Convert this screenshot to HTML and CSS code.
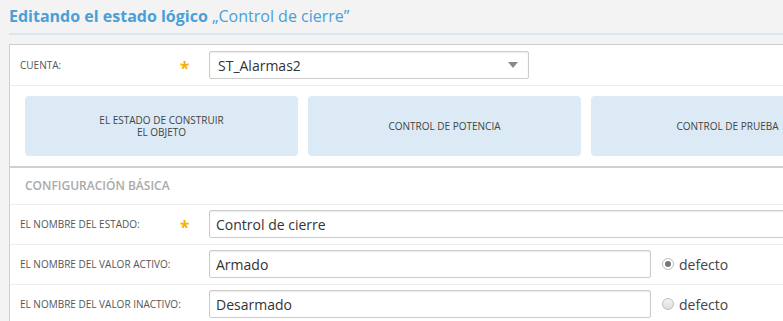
FILE: index.html
```html
<!DOCTYPE html>
<html lang="es">
<head>
<meta charset="utf-8">
<title>Editando el estado lógico</title>
<link rel="stylesheet" href="styles.css">
</head>
<body>
<div class="page">
  <header class="header">
    <h1 class="title"><span class="title-strong">Editando el estado lógico</span> <span class="title-name">„Control de cierre”</span></h1>
  </header>
  <div class="panel">
    <div class="row">
      <label class="label">CUENTA:</label>
      <span class="req">*</span>
      <div class="select">
        <span class="select-value">ST_Alarmas2</span>
        <span class="select-arrow"></span>
      </div>
    </div>
    <div class="cards">
      <div class="card"><span class="card-text">EL ESTADO DE CONSTRUIR<br>EL OBJETO</span></div>
      <div class="card"><span class="card-text">CONTROL DE POTENCIA</span></div>
      <div class="card"><span class="card-text">CONTROL DE PRUEBA</span></div>
    </div>
    <div class="section-title">CONFIGURACIÓN BÁSICA</div>
    <div class="row row-tight">
      <label class="label">EL NOMBRE DEL ESTADO:</label>
      <span class="req">*</span>
      <div class="input input-wide">Control de cierre</div>
    </div>
    <div class="row row-tight">
      <label class="label">EL NOMBRE DEL VALOR ACTIVO:</label>
      <span class="req"></span>
      <div class="input input-mid">Armado</div>
      <span class="radio radio-on"></span>
      <span class="radio-label">defecto</span>
    </div>
    <div class="row row-tight">
      <label class="label">EL NOMBRE DEL VALOR INACTIVO:</label>
      <span class="req"></span>
      <div class="input input-mid">Desarmado</div>
      <span class="radio"></span>
      <span class="radio-label">defecto</span>
    </div>
  </div>
</div>
</body>
</html>
```
FILE: styles.css
```css
html, body {
  margin: 0;
  padding: 0;
  background: #f3f3f3;
  overflow: hidden;
}
body {
  font-family: "Open Sans", "Noto Sans", sans-serif;
  color: #444;
}
.page {
  width: 920px;
}
.header {
  margin-left: 9px;
  padding-top: 4px;
  padding-bottom: 5px;
  border-bottom: 2px solid #d6e6f2;
}
.title {
  margin: 0;
  font-size: 16px;
  line-height: 24px;
  color: #4a9fd6;
  font-weight: 400;
  white-space: nowrap;
}
.title-strong {
  font-weight: 700;
}
.panel {
  margin: 9px 0 0 9px;
  background: #fff;
  border: 1px solid #cfcfcf;
  border-right: none;
}
.row {
  display: flex;
  align-items: center;
  padding: 6px 0 6px 10px;
  border-bottom: 1px solid #ececec;
}
.row-tight {
  padding-top: 5px;
}
.label {
  flex: none;
  width: 160px;
  font-size: 10px;
  color: #555;
  white-space: nowrap;
}
.req {
  flex: none;
  width: 29px;
  color: #f5b000;
  font-weight: 700;
  font-size: 17px;
  line-height: 17px;
  padding-top: 5px;
  box-sizing: border-box;
  height: 20px;
}
.select, .input {
  box-sizing: border-box;
  height: 28px;
  border: 1px solid #cccccc;
  border-radius: 2px;
  box-shadow: inset 0 1px 2px rgba(0,0,0,0.08);
  background: #fff;
  font-size: 14px;
  color: #333;
  display: flex;
  align-items: center;
}
.select {
  flex: none;
  width: 320px;
  padding: 0 8px;
  justify-content: space-between;
}
.select-arrow {
  width: 0;
  height: 0;
  border-left: 5px solid transparent;
  border-right: 5px solid transparent;
  border-top: 6px solid #8a8a8a;
  margin-right: 2px;
}
.input {
  padding: 0 6px;
}
.input-wide {
  flex: 1;
}
.input-mid {
  flex: none;
  width: 442px;
}
.cards {
  display: flex;
  gap: 10px;
  padding: 10px 0 10px 15px;
  border-bottom: 2px solid #d0d0d0;
}
.card {
  width: 273px;
  height: 60px;
  flex: none;
  box-sizing: border-box;
  background: #dbeaf5;
  border-radius: 4px;
  display: flex;
  align-items: center;
  justify-content: center;
  text-align: center;
}
.card-text {
  font-size: 10px;
  line-height: 12px;
  color: #444;
}
.section-title {
  height: 36px;
  line-height: 36px;
  padding-left: 15px;
  font-size: 12px;
  font-weight: 600;
  color: #aaaaaa;
  border-bottom: 1px solid #ececec;
}
.radio {
  flex: none;
  box-sizing: border-box;
  width: 12px;
  height: 12px;
  border-radius: 50%;
  border: 1px solid #bdbdbd;
  background: linear-gradient(#f4f4f4, #dedede);
  margin-left: 11px;
  position: relative;
}
.radio-on {
  background: #fff;
}
.radio-on::after {
  content: "";
  position: absolute;
  left: 2px;
  top: 2px;
  width: 6px;
  height: 6px;
  border-radius: 50%;
  background: #777;
}
.radio-label {
  font-size: 14px;
  color: #444;
  margin-left: 5px;
}
```
